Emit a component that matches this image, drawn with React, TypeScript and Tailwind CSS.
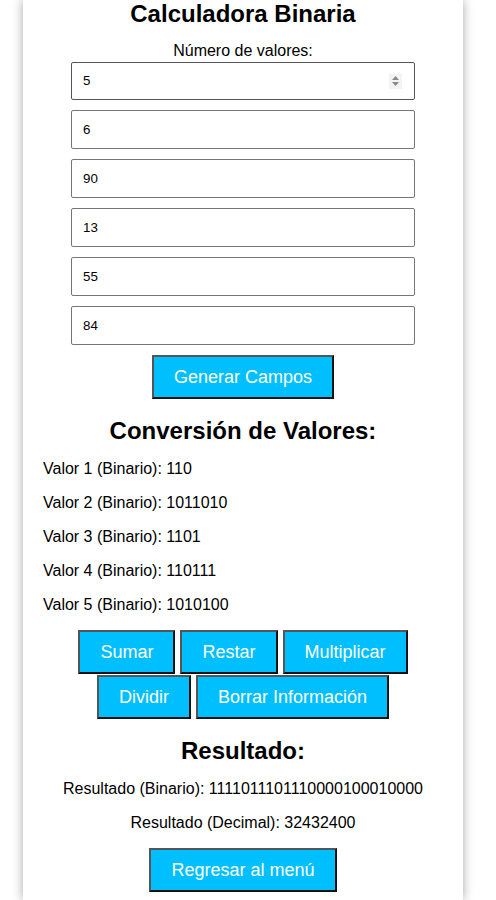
const values = ['6', '90', '13', '55', '84'];

function toBin(v: string) {
  return parseInt(v, 10).toString(2);
}

function Btn({ children }: { children: React.ReactNode }) {
  return (
    <button className="h-[44px] px-[20px] bg-[#00bfff] text-white text-[18px] leading-[21px] border-2 border-t-[#555555] border-l-[#555555] border-r-[#111111] border-b-[#111111]">
      {children}
    </button>
  );
}

function SpinIcon() {
  return (
    <div className="w-[13px] h-[15px] bg-[#f3f3f3] flex flex-col items-center justify-center gap-[2px]">
      <svg width="7" height="4" viewBox="0 0 7 4">
        <path d="M3.5 0 L7 4 L0 4 Z" fill="#8a8a8a" />
      </svg>
      <svg width="7" height="4" viewBox="0 0 7 4">
        <path d="M0 0 L7 0 L3.5 4 Z" fill="#8a8a8a" />
      </svg>
    </div>
  );
}

export default function App() {
  return (
    <div className="min-h-[900px] bg-white font-['Liberation_Sans',Arial,sans-serif] text-black">
      <div className="mx-[23px] w-[440px] min-h-[900px] bg-white shadow-[0_0_10px_rgba(0,0,0,0.35)] px-[20px] flex flex-col items-center">
        <h1 className="text-[24px] leading-[28px] font-bold text-center">Calculadora Binaria</h1>

        <label className="mt-[14px] text-[16px] leading-[18px]">Número de valores:</label>
        <div className="mt-[2px] w-[344px] h-[38px] border border-[#555555] rounded-[2px] flex items-center pl-[11px] pr-[12px] text-[13.33px]">
          <span className="flex-1">5</span>
          <SpinIcon />
        </div>

        {values.map((v, i) => (
          <div
            key={i}
            className="mt-[10px] w-[344px] h-[39px] border border-[#767676] rounded-[2px] flex items-center pl-[11px] text-[13.33px]"
          >
            {v}
          </div>
        ))}

        <div className="mt-[10px]">
          <Btn>Generar Campos</Btn>
        </div>

        <h2 className="mt-[18px] text-[24px] leading-[28px] font-bold text-center">Conversión de Valores:</h2>

        <div className="self-stretch mt-[15px] flex flex-col gap-[16px]">
          {values.map((v, i) => (
            <p key={i} className="text-[16px] leading-[18px]">
              Valor {i + 1} (Binario): {toBin(v)}
            </p>
          ))}
        </div>

        <div className="mt-[16px] flex flex-wrap justify-center gap-x-[5px] gap-y-[1px] w-[400px]">
          <Btn>Sumar</Btn>
          <Btn>Restar</Btn>
          <Btn>Multiplicar</Btn>
          <Btn>Dividir</Btn>
          <Btn>Borrar Información</Btn>
        </div>

        <h2 className="mt-[18px] text-[24px] leading-[28px] font-bold text-center">Resultado:</h2>
        <p className="mt-[15px] text-[16px] leading-[18px] text-center">
          Resultado (Binario): 1111011101110000100010000
        </p>
        <p className="mt-[16px] text-[16px] leading-[18px] text-center">Resultado (Decimal): 32432400</p>

        <div className="mt-[16px]">
          <Btn>Regresar al menú</Btn>
        </div>
      </div>
    </div>
  );
}
